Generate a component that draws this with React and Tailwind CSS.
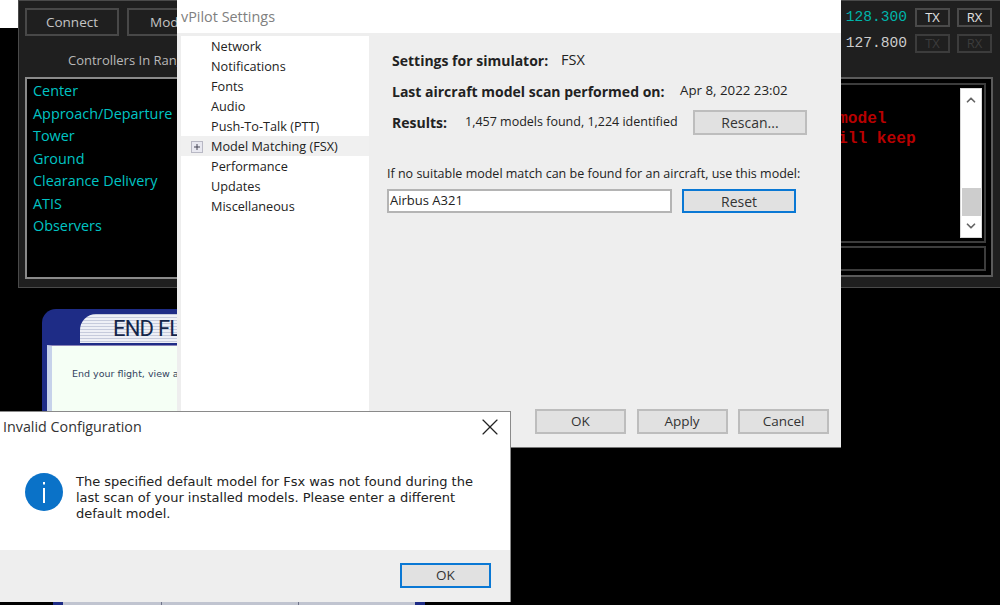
import { ChevronDown, ChevronUp, X } from 'lucide-react';

const ui = "font-['Open_Sans',sans-serif]";
const stations = ['Center', 'Approach/Departure', 'Tower', 'Ground', 'Clearance Delivery', 'ATIS', 'Observers'];
const treeItems = ['Network', 'Notifications', 'Fonts', 'Audio', 'Push-To-Talk (PTT)', 'Model Matching (FSX)', 'Performance', 'Updates', 'Miscellaneous'];

const RadioButton = ({ label, off }) => (
  <div className={`w-[35px] h-[19px] border-2 flex items-center justify-center text-[13px] ${off ? 'border-[#3c3c3c] text-[#3c3c3c]' : 'border-[#4a4a4a] text-[#e0e0e0]'}`}>
    {label}
  </div>
);

const RadioRow = ({ freq, color, off }) => (
  <div className="flex items-center h-[19px] mr-[1px]">
    <span className={`font-['Liberation_Mono',monospace] text-[14.6px] mr-[8px] ${color}`}>{freq}</span>
    <RadioButton label="TX" off={off} />
    <div className="w-[7px]" />
    <RadioButton label="RX" off={off} />
  </div>
);

const DarkButton = ({ children, className }) => (
  <div className={`h-[28px] w-[94px] border-2 border-[#484848] flex items-center text-[13.5px] text-[#c4c4c4] ${className}`}>
    {children}
  </div>
);

const GrayButton = ({ children, focused, className = 'w-[91px] h-[25px] text-[13.5px]' }) => (
  <div className={`${className} shrink-0 flex items-center justify-center bg-[#e1e1e1] border-2 text-[#333] ${focused ? 'border-[#0a78d4]' : 'border-[#bdbdbd]'}`}>
    {children}
  </div>
);

const VPilotWindow = () => (
  <div className={`${ui} absolute left-[18px] top-0 w-[982px] h-[288px] bg-[#1f1f1f] border-l border-b border-t border-[#4a4a4a] flex justify-between pl-[6px] pr-[7px]`}>
    <div className="w-[300px] pt-[7px] flex flex-col">
      <div className="flex gap-[8px]">
        <DarkButton className="justify-center">Connect</DarkButton>
        <DarkButton className="pl-[21px]">Mod</DarkButton>
      </div>
      <p className="mt-[14px] ml-[43px] h-[20px] leading-[20px] text-[13px] text-[#b8b8b8] whitespace-nowrap">Controllers In Range</p>
      <div className="mt-[7px] h-[202px] border-2 border-[#8a8a8a] bg-black pl-[6px] pt-[1px]">
        {stations.map((s) => (
          <p key={s} className="h-[22.5px] leading-[22.5px] text-[14.4px] text-[#00c4c4]">{s}</p>
        ))}
      </div>
    </div>

    <div className="w-[500px] pt-[7px] flex flex-col items-end">
      <div className="flex flex-col gap-[7px]">
        <RadioRow freq="128.300" color="text-[#00b4aa]" />
        <RadioRow freq="127.800" color="text-[#cccccc]" off />
      </div>
      <div className="mt-[24px] w-full h-[200px] border-2 border-[#5a5a5a] bg-black p-[4px] pr-[5px] flex flex-col gap-[3px]">
        <div className="h-[161px] border-2 border-[#3c3c3c] pt-[3px] pr-[2px] pb-[3px] flex justify-between">
          <div className="pl-[337px] pt-[21px] font-['Liberation_Mono',monospace] font-bold text-[16.2px] leading-[20px] text-[#b80000] whitespace-pre">
            <p>model</p>
            <p>ill keep</p>
          </div>
          <div className="w-[22px] h-[150px] bg-white border border-[#d8d8d8] flex flex-col items-center text-[#666]">
            <ChevronUp size={14} strokeWidth={3} className="mt-[4px]" />
            <div className="mt-[81px] w-[19px] h-[28px] bg-[#cdcdcd]" />
            <ChevronDown size={14} strokeWidth={3} className="mt-[3px]" />
          </div>
        </div>
        <div className="h-[26px] border-2 border-[#3c3c3c]" />
      </div>
    </div>
  </div>
);

const EndFlightWindow = () => (
  <div className="absolute left-[42px] top-[309px] w-[388px] h-[296px] flex flex-col">
    <div className="h-[293px] bg-[#1e2c86] rounded-tl-[14px] pl-[5px] pr-[10px] pt-[5px] flex flex-col">
      <div className="ml-[33px] h-[29px] rounded-tl-[16px] bg-[repeating-linear-gradient(180deg,#c6cbdc_0px,#c6cbdc_1px,#eef0f6_1px,#eef0f6_3px)] pl-[33px] flex items-center">
        <span className="font-['Roboto',sans-serif] text-[22px] tracking-[-0.8px] text-[#14264a]">END FLIGHT</span>
      </div>
      <div className="flex-1 mt-[2px] border-t border-[#8a84b8] border-l-[5px] border-l-[#c6d2ea] bg-[#f5fff5] pl-[20px] pt-[21px]">
        <p className="font-['DejaVu_Sans',sans-serif] text-[9.5px] text-[#33435f] whitespace-nowrap">End your flight, view all</p>
      </div>
    </div>
    <div className="h-[3px] ml-[11px] mr-[5px] px-[10px] bg-[#1e2c86]">
      <div className="h-full flex bg-[#c0c4d0]">
        <div className="w-[99px] border-r border-[#70748a]" />
        <div className="w-[137px] border-r border-[#70748a]" />
      </div>
    </div>
  </div>
);

const SettingsWindow = () => (
  <div className={`${ui} absolute left-[177px] top-0 w-[664px] h-[448px] bg-[#eeeeee] border-b border-[#777] flex flex-col text-[#222]`}>
    <div className="h-[33px] bg-white pl-[4px] flex items-center text-[14.4px] text-[#808080]">vPilot Settings</div>
    <div className="flex-1 flex min-h-0">
      <div className="ml-[4px] mt-[3px] w-[188px] shrink-0 bg-white">
        {treeItems.map((item) => {
          const selected = item.startsWith('Model');
          return (
            <div key={item} className={`h-[20px] pt-[1px] flex items-center text-[12.7px] whitespace-nowrap ${selected ? 'bg-[#f0f0f0]' : ''}`}>
              <div className="w-[30px] pl-[10px]">
                {selected && (
                  <svg width="12" height="12" viewBox="0 0 12 12" className="block">
                    <rect x="0.5" y="0.5" width="11" height="11" fill="#e8e8f0" stroke="#b8b8c4" />
                    <path d="M3 6h6M6 3v6" stroke="#445" strokeWidth="1" />
                  </svg>
                )}
              </div>
              {item}
            </div>
          );
        })}
      </div>
      <div className="flex-1 min-w-0 flex flex-col pl-[18px] pr-[12px] pt-[16px] text-[13px]">
        <div className="h-[22px] pl-[5px] flex items-center whitespace-nowrap">
          <b className="font-bold text-[14px] w-[169px]">Settings for simulator:</b>
          <span className="text-[14.5px]">FSX</span>
        </div>
        <div className="h-[22px] mt-[9px] pl-[5px] flex items-center whitespace-nowrap">
          <b className="font-bold text-[14px] w-[288px]">Last aircraft model scan performed on:</b>
          <span className="text-[13.3px]">Apr 8, 2022 23:02</span>
        </div>
        <div className="h-[25px] mt-[8px] pl-[5px] flex items-center whitespace-nowrap">
          <b className="font-bold text-[14px] w-[73px]">Results:</b>
          <span className="w-[228px] text-[12.5px]">1,457 models found, 1,224 identified</span>
          <GrayButton className="w-[114px] h-[25px] text-[14px]">Rescan...</GrayButton>
        </div>
        <p className="mt-[30px] h-[18px] leading-[18px] text-[12.5px] whitespace-nowrap">If no suitable model match can be found for an aircraft, use this model:</p>
        <div className="mt-[6px] flex gap-[10px]">
          <div className="w-[285px] h-[24px] bg-white border-2 border-[#b4b4b4] pl-[1px] flex items-center">Airbus A321</div>
          <GrayButton focused className="w-[114px] h-[24px] text-[14px]">Reset</GrayButton>
        </div>
        <div className="mt-auto mb-[13px] flex justify-end gap-[10.5px]">
          <GrayButton>OK</GrayButton>
          <GrayButton>Apply</GrayButton>
          <GrayButton>Cancel</GrayButton>
        </div>
      </div>
    </div>
  </div>
);

const InvalidDialog = () => (
  <div className={`${ui} absolute left-0 top-[411px] w-[511px] h-[191px] bg-white border-r border-t border-[#8a8a8a] flex flex-col`}>
    <div className="h-[30px] pl-[3px] flex items-center justify-between pr-[6px] text-[14.3px] text-[#333]">
      Invalid Configuration
      <X size={28} strokeWidth={1} className="text-[#222]" />
    </div>
    <div className="flex-1 flex pl-[25px] pt-[30px] gap-[13px]">
      <svg width="38" height="38" viewBox="0 0 38 38" className="shrink-0 mt-[1px]">
        <circle cx="19" cy="19" r="19" fill="#0a72c8" />
        <rect x="18" y="9" width="2" height="2.5" fill="#fff" />
        <rect x="18" y="15" width="2" height="15" fill="#fff" />
      </svg>
      <p className="font-['DejaVu_Sans',sans-serif] w-[410px] mt-[2px] text-[13px] leading-[16px] text-[#222]">
        The specified default model for Fsx was not found during the last scan of your installed models. Please enter a different default model.
      </p>
    </div>
    <div className="h-[52px] bg-[#eeeeee] flex justify-end pr-[19px] pt-[13px]">
      <GrayButton focused>OK</GrayButton>
    </div>
  </div>
);

export default function App() {
  return (
    <div className="relative w-[1000px] h-[605px] bg-black overflow-hidden">
      <div className="absolute left-0 top-0 w-[18px] h-[28px] bg-white" />
      <VPilotWindow />
      <EndFlightWindow />
      <SettingsWindow />
      <InvalidDialog />
    </div>
  );
}
